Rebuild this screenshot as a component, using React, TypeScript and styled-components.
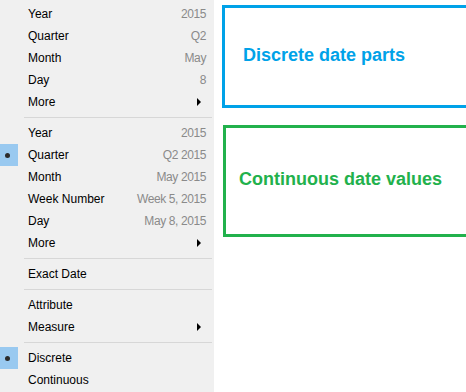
import React from "react";
import styled, { createGlobalStyle } from "styled-components";

const Global = createGlobalStyle`
  html, body { margin: 0; padding: 0; background: #ffffff; overflow: hidden; }
  body { width: 466px; height: 392px; }
`;

const Page = styled.div`
  display: flex;
  width: 466px;
  height: 392px;
  overflow: hidden;
`;

const Menu = styled.div`
  width: 214px;
  flex-shrink: 0;
  height: 392px;
  background: #f0f0f0;
  padding-top: 3px;
  box-sizing: border-box;
  font-family: "Liberation Sans", Arial, sans-serif;
  font-size: 12px;
  color: #000;
`;

const Row = styled.div`
  display: flex;
  align-items: center;
  height: 22px;
  padding-right: 8px;
`;

const Gutter = styled.div<{ $checked?: boolean }>`
  width: 18px;
  height: 22px;
  margin-right: 10px;
  display: flex;
  align-items: center;
  justify-content: center;
  background: ${(p) => (p.$checked ? "#99c9f0" : "transparent")};
`;

const Dot = styled.span`
  width: 5px;
  height: 5px;
  border-radius: 50%;
  background: #2b2b2b;
  margin-left: -3px;
`;

const Label = styled.span`
  flex: 1;
  white-space: nowrap;
`;

const Value = styled.span`
  color: #8a8a8a;
  white-space: nowrap;
  letter-spacing: -0.4px;
`;

const Arrow = styled.span`
  width: 0;
  height: 0;
  border-top: 4px solid transparent;
  border-bottom: 4px solid transparent;
  border-left: 4px solid #000;
  margin-right: 5px;
`;

const Separator = styled.div`
  height: 1px;
  background: #d7d7d7;
  margin: 4px 2px 4px 24px;
`;

const Notes = styled.div`
  display: flex;
  flex-direction: column;
  padding-left: 8px;
  padding-top: 5px;
  gap: 17px;
  flex-shrink: 0;
`;

const Callout = styled.div<{ $color: string; $height: number; $pad: number; $offset: number }>`
  width: 300px;
  height: ${(p) => p.$height}px;
  box-sizing: border-box;
  border: 3px solid ${(p) => p.$color};
  margin-left: ${(p) => p.$offset}px;
  display: flex;
  align-items: center;
  padding-left: ${(p) => p.$pad}px;
  padding-bottom: 3px;
  color: ${(p) => p.$color};
  font-family: "Liberation Sans", Arial, sans-serif;
  font-weight: bold;
  font-size: 18px;
  white-space: nowrap;
`;

type Item =
  | { kind: "item"; label: string; value?: string; sub?: boolean; checked?: boolean }
  | { kind: "sep" };

const items: Item[] = [
  { kind: "item", label: "Year", value: "2015" },
  { kind: "item", label: "Quarter", value: "Q2" },
  { kind: "item", label: "Month", value: "May" },
  { kind: "item", label: "Day", value: "8" },
  { kind: "item", label: "More", sub: true },
  { kind: "sep" },
  { kind: "item", label: "Year", value: "2015" },
  { kind: "item", label: "Quarter", value: "Q2 2015", checked: true },
  { kind: "item", label: "Month", value: "May 2015" },
  { kind: "item", label: "Week Number", value: "Week 5, 2015" },
  { kind: "item", label: "Day", value: "May 8, 2015" },
  { kind: "item", label: "More", sub: true },
  { kind: "sep" },
  { kind: "item", label: "Exact Date" },
  { kind: "sep" },
  { kind: "item", label: "Attribute" },
  { kind: "item", label: "Measure", sub: true },
  { kind: "sep" },
  { kind: "item", label: "Discrete", checked: true },
  { kind: "item", label: "Continuous" },
];

export default function App() {
  return (
    <>
      <Global />
      <Page>
        <Menu>
          {items.map((it, i) =>
            it.kind === "sep" ? (
              <Separator key={i} />
            ) : (
              <Row key={i}>
                <Gutter $checked={it.checked}>{it.checked && <Dot />}</Gutter>
                <Label>{it.label}</Label>
                {it.value && <Value>{it.value}</Value>}
                {it.sub && <Arrow />}
              </Row>
            )
          )}
        </Menu>
        <Notes>
          <Callout $color="#00a2e8" $height={103} $pad={18} $offset={0}>
            Discrete date parts
          </Callout>
          <Callout $color="#22b14c" $height={112} $pad={13} $offset={1}>
            Continuous date values
          </Callout>
        </Notes>
      </Page>
    </>
  );
}
